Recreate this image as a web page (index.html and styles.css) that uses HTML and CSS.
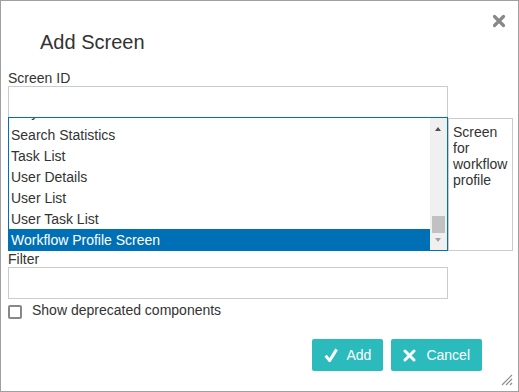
FILE: index.html
```html
<!DOCTYPE html>
<html lang="en">
<head>
  <meta charset="UTF-8" />
  <title>Add Screen</title>
  <link rel="stylesheet" href="styles.css">
</head>
<body>
  <div class="dialog">
    <button class="close" title="Close">
      <svg width="14" height="14" viewBox="0 0 14 14"><path d="M2.5 2.5 L11.5 11.5 M11.5 2.5 L2.5 11.5" stroke="#888" stroke-width="3.2" stroke-linecap="round" fill="none"/></svg>
    </button>

    <h1 class="title">Add Screen</h1>

    <label class="field-label">Screen ID</label>
    <input class="text-input" type="text" />

    <div class="picker">
      <div class="listbox">
        <div class="options">
          <div class="option first">Playlists</div>
          <div class="option">Search Statistics</div>
          <div class="option">Task List</div>
          <div class="option">User Details</div>
          <div class="option">User List</div>
          <div class="option">User Task List</div>
          <div class="option selected">Workflow Profile Screen</div>
        </div>
        <div class="scrollbar">
          <div class="arrow up"></div>
          <div class="track"><div class="thumb"></div></div>
          <div class="arrow down"></div>
        </div>
      </div>
      <div class="description">Screen for workflow profile</div>
    </div>

    <label class="field-label">Filter</label>
    <input class="text-input" type="text" />

    <label class="check-row">
      <span class="checkbox"></span>
      <span>Show deprecated components</span>
    </label>

    <div class="actions">
      <button class="btn">
        <svg width="14" height="16" viewBox="0 0 14 16"><path d="M1.6 8.6 L5.6 13.6 L12.6 2.4" stroke="#fff" stroke-width="3" stroke-linejoin="round" fill="none"/></svg>
        Add
      </button>
      <button class="btn cancel">
        <svg width="13" height="13" viewBox="0 0 13 13"><path d="M2 2 L11 11 M11 2 L2 11" stroke="#fff" stroke-width="3" stroke-linecap="round" fill="none"/></svg>
        Cancel
      </button>
    </div>

    <svg class="grip" width="12" height="12" viewBox="0 0 12 12">
      <path d="M11 1 L1 11 M11 5 L5 11 M11 9 L9 11" stroke="#8c8c8c" stroke-width="1.2" fill="none"/>
    </svg>
  </div>
</body>
</html>
```

FILE: styles.css
```css
* {
  margin: 0; padding: 0; box-sizing: border-box;
  font-family: 'Liberation Sans', Arial, sans-serif;
}
body {
  background: #fff; color: #333;
}
.dialog {
  position: relative;
  width: 519px; height: 392px;
  border: 1px solid #a0a0a0;
  padding: 29px 5px 0 7px;
  background: #fff;
}
.close {
  position: absolute; top: 13px; right: 12px;
  width: 14px; height: 14px;
  border: none; background: none; cursor: pointer;
  display: flex;
}
.title {
  font-size: 20px; font-weight: normal;
  line-height: 24px; color: #333;
  margin-left: 32px; margin-bottom: 16px;
}
.field-label {
  display: block;
  font-size: 14px; line-height: 16px; color: #333;
}
.text-input {
  display: block;
  width: 440px; height: 32px;
  border: 1px solid #ccc; background: #fff;
  outline: none; font-size: 14px; padding: 0 4px;
}
.picker {
  display: flex; align-items: flex-start;
  margin-top: -1px;
}
.listbox {
  display: flex;
  width: 440px; height: 134px;
  border: 1px solid #0070b8;
  overflow: hidden;
}
.options {
  width: 421px;
  margin-top: -15px;
}
.option {
  height: 21px;
  padding: 3px 2px 0;
  font-size: 14px; line-height: 16px;
  color: #333; white-space: nowrap;
}
.option.first {
  padding-top: 1px;
}
.option.selected {
  background: #0070b6; color: #fff;
}
.scrollbar {
  width: 17px;
  background: #f0f0f0;
  display: flex; flex-direction: column;
}
.arrow {
  height: 17px; position: relative;
}
.arrow::after {
  content: ""; position: absolute;
  left: 5px; width: 0; height: 0;
  border-left: 3.5px solid transparent;
  border-right: 3.5px solid transparent;
}
.arrow.up::after {
  top: 9px; border-bottom: 4px solid #505050;
}
.arrow.down::after {
  top: 5px; border-top: 4px solid #a3a3a3;
}
.track {
  flex: 1;
  display: flex; flex-direction: column; justify-content: flex-end;
}
.thumb {
  height: 17px; margin: 0 2px;
  background: #c1c1c1;
}
.description {
  width: 65px; height: 133px;
  margin-top: 1px;
  border: 1px solid #ccc;
  padding: 5px 4px 0 4px;
  font-size: 14px; line-height: 16px; color: #333;
}
.check-row {
  display: flex; align-items: flex-start; gap: 10px;
  margin-top: 3px;
  font-size: 14px; line-height: 16px; color: #333;
}
.checkbox {
  width: 14px; height: 14px;
  margin-top: 3px;
  border: 2px solid #888; border-radius: 2px;
  background: #fff;
}
.actions {
  display: flex; justify-content: flex-end; gap: 8px;
  margin-top: 20px; margin-right: 31px;
}
.btn {
  display: flex; align-items: center; gap: 8px;
  height: 32px; padding: 0 12px;
  border: none; border-radius: 2px;
  background: #2bbbbd; color: #fff;
  font-size: 14px; line-height: 16px;
  cursor: pointer;
}
.btn.cancel {
  gap: 10px;
}
.grip {
  position: absolute; right: 5px; bottom: 5px;
}
```
